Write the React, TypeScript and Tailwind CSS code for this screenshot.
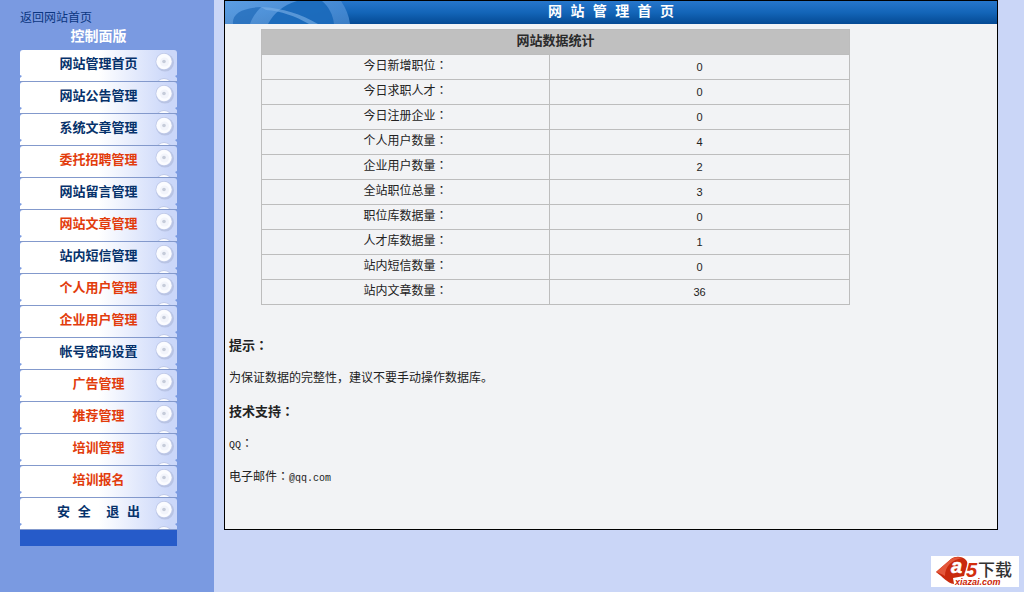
const menuItems = [
  { label: "网站管理首页", hot: false },
  { label: "网站公告管理", hot: false },
  { label: "系统文章管理", hot: false },
  { label: "委托招聘管理", hot: true },
  { label: "网站留言管理", hot: false },
  { label: "网站文章管理", hot: true },
  { label: "站内短信管理", hot: false },
  { label: "个人用户管理", hot: true },
  { label: "企业用户管理", hot: true },
  { label: "帐号密码设置", hot: false },
  { label: "广告管理", hot: true },
  { label: "推荐管理", hot: true },
  { label: "培训管理", hot: true },
  { label: "培训报名", hot: true },
  { label: "安 全  退 出", hot: false },
];

const stats = [
  { label: "今日新增职位", value: 0 },
  { label: "今日求职人才", value: 0 },
  { label: "今日注册企业", value: 0 },
  { label: "个人用户数量", value: 4 },
  { label: "企业用户数量", value: 2 },
  { label: "全站职位总量", value: 3 },
  { label: "职位库数据量", value: 0 },
  { label: "人才库数据量", value: 1 },
  { label: "站内短信数量", value: 0 },
  { label: "站内文章数量", value: 36 },
];

// Full-width colon sitting in the middle of its box
function Colon() {
  return <span className="font-['Noto_Sans_CJK_TC',sans-serif] leading-none">：</span>;
}

// Round knob on every menu row, plus the start of the next tile below it
function RowArt() {
  return (
    <svg aria-hidden="true" width="157" height="31" viewBox="0 0 157 31" className="pointer-events-none absolute left-0 top-0">
      <path d="M0 25L2 26L0 28Z" fill="#7a9ae1" />
      <path d="M157 25L155 26L157 28Z" fill="#7a9ae1" />
      <circle cx="145" cy="12.6" r="9" fill="#b3bede" opacity="0.8" />
      <circle cx="144" cy="11.5" r="8.5" fill="#c0cae8" />
      <circle cx="144" cy="11.5" r="7.7" fill="#fbfcff" />
      <circle cx="144.5" cy="12" r="4.5" fill="#f2f4fb" />
      <circle cx="144" cy="11.5" r="1.8" fill="#c6ccda" />
      <circle cx="144" cy="37" r="9" fill="#c0cae8" />
      <circle cx="144" cy="37" r="8" fill="#fbfcff" />
    </svg>
  );
}

function Sidebar() {
  return (
    <aside className="w-[214px] shrink-0 bg-[#7a9ae1] pl-5 pt-2">
      <a href="#" className="block text-xs leading-[22px] text-[#0b3680]">返回网站首页</a>
      <nav className="w-[157px]">
        <h2 className="h-5 text-center text-[14px] font-bold leading-[14px] text-white">控制面版</h2>
        <ul>
          {menuItems.map((item) => (
            <li key={item.label} className="relative h-8 border-b border-[#8399cc]">
              <a
                href="#"
                className={`block h-[31px] whitespace-pre rounded-t-[3px] bg-linear-to-r from-white from-50% to-[#cbd7f9] to-95% text-center text-[13px] font-bold leading-[29px] ${item.hot ? "text-[#e23c0c]" : "text-[#06326b]"}`}
              >
                {item.label}
              </a>
              <RowArt />
            </li>
          ))}
        </ul>
        <div className="h-4 bg-[#265bc9]" />
      </nav>
    </aside>
  );
}

function PanelHeader() {
  return (
    <header className="relative h-[23px] overflow-hidden bg-linear-to-b from-[#2676cb] via-[#1365b8] to-[#054a94]">
      <svg aria-hidden="true" width="136" height="23" viewBox="0 0 136 23" className="absolute left-0 top-0">
        <defs>
          <linearGradient id="haze" x1="0" x2="1">
            <stop offset="0" stopColor="#6eaaea" />
            <stop offset="1" stopColor="#4e8fd6" />
          </linearGradient>
        </defs>
        <path d="M0 0H116C121 7 124 15 125 23H0Z" fill="url(#haze)" opacity="0.75" />
        <path d="M8 23C7 13 16 7 36 6C31 11 27 17 25 23Z" fill="#1a66b6" opacity="0.65" />
        <path d="M43 23C49 12 58 4 72 0H97C104 6 108 14 109 23Z" fill="#1566b8" opacity="0.85" />
        <path d="M36 6C58 7 76 13 93 23H84C70 15 56 10 41 9Z" fill="#7fb3e8" opacity="0.6" />
      </svg>
      <h1 className="relative text-center text-[14px] font-bold leading-[22px] text-white">网 站 管 理 首 页</h1>
    </header>
  );
}

function StatsTable() {
  return (
    <div className="ml-9 mr-[147px] pt-[5px]">
      <table className="w-full table-fixed border-collapse border border-[#bdbdbd] text-center text-xs text-[#222]">
        <colgroup>
          <col className="w-[49%]" />
          <col />
        </colgroup>
        <thead>
          <tr className="h-[25px] bg-[#c0c0c0]">
            <th colSpan={2} className="p-0 text-[13px] font-bold leading-6 text-[#2b2b2b]">网站数据统计</th>
          </tr>
        </thead>
        <tbody>
          {stats.map((row) => (
            <tr key={row.label} className="h-[25px]">
              <td className="border border-[#bdbdbd] p-0 leading-6">{row.label}<Colon /></td>
              <td className="border border-[#bdbdbd] p-0 font-['Liberation_Sans',sans-serif] text-[11px] leading-[22px]">{row.value}</td>
            </tr>
          ))}
        </tbody>
      </table>
    </div>
  );
}

function SiteLogo() {
  return (
    <svg role="img" aria-label="a5下载" width="88" height="31" viewBox="0 0 88 31" className="block bg-white">
      <path d="M5 16L20 3C24 0 31 0 35 4C37 7 37 9 36 11L33 20L22 22L23 28C16 27 12 21 5 16Z" fill="#c92a0d" />
      <path d="M5 16L20 3C24 1 28 1 31 2C21 4 14 10 14 20C11 18 8 17 5 16Z" fill="#e4573a" />
      <text x="20" y="17" fontFamily="Liberation Sans, sans-serif" fontSize="20" fontWeight="bold" fontStyle="italic" fill="#fff" stroke="#fff" strokeWidth="0.6">a</text>
      <text x="35" y="21" fontFamily="Liberation Sans, sans-serif" fontSize="20" fontWeight="bold" fontStyle="italic" fill="#d22d0c" stroke="#fff" strokeWidth="2.5" paintOrder="stroke">5</text>
      <text x="47" y="20" fontFamily="Noto Sans CJK SC, sans-serif" fontSize="17" fontWeight="500" fill="#333">下载</text>
      <text x="24" y="29" fontFamily="Liberation Sans, sans-serif" fontSize="9" fontWeight="bold" fontStyle="italic" fill="#cc2608" stroke="#fff" strokeWidth="1.5" paintOrder="stroke">xiazai.com</text>
    </svg>
  );
}

export default function App() {
  return (
    <div className="flex min-h-screen bg-[#cad6f7] font-['Liberation_Mono','Noto_Sans_CJK_SC',monospace]">
      <Sidebar />
      <div className="min-w-0 grow pl-[10px]">
        <main className="mr-[26px] border border-black bg-[#f2f3f5]">
          <PanelHeader />
          <StatsTable />
          <section className="px-1 pb-[34px] pt-[25px] text-xs leading-[33px] text-[#222]">
            <h3 className="text-[13px] font-bold">提示<Colon /></h3>
            <p>为保证数据的完整性，建议不要手动操作数据库。</p>
            <h3 className="text-[13px] font-bold">技术支持<Colon /></h3>
            <p><span className="text-[10px]">QQ</span><Colon /></p>
            <p>电子邮件<Colon /><span className="text-[10px]">@qq.com</span></p>
          </section>
        </main>
        <footer className="flex justify-end pr-[5px] pt-[26px]">
          <SiteLogo />
        </footer>
      </div>
    </div>
  );
}
